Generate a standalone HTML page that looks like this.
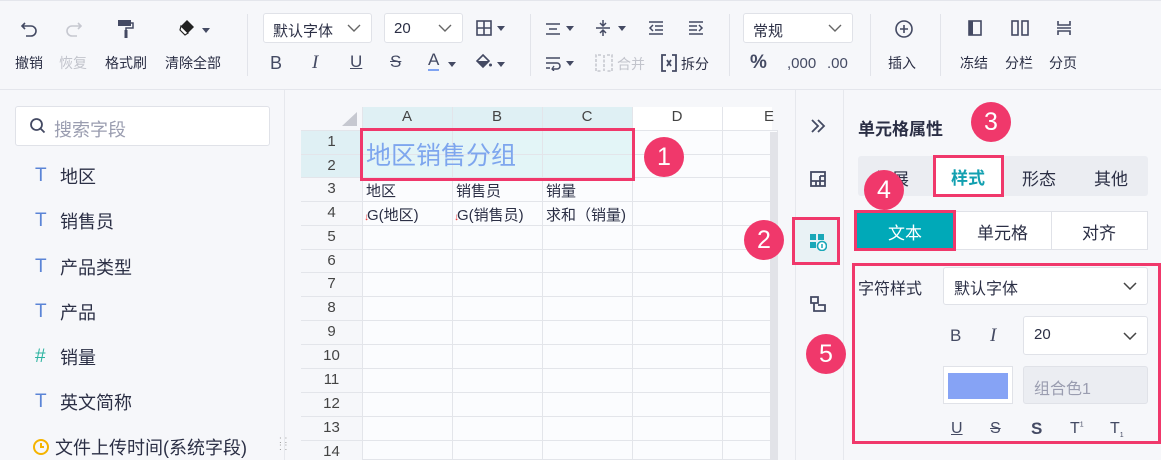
<!DOCTYPE html>
<html><head><meta charset="utf-8"><style>
*{margin:0;padding:0;box-sizing:border-box}
body{width:1161px;height:460px;overflow:hidden;background:#f6f7fa;font-family:"Liberation Sans","Noto Sans CJK SC",sans-serif;color:#2b2f45;position:relative}
.a{position:absolute}
.tb{left:0;top:0;width:1161px;height:90px;background:#f6f7fa;border-top:1px solid #e4e6ec;border-bottom:1px solid #e4e6ec}
.lbl{font-size:14px;white-space:nowrap}
.sel{background:#fff;border:1px solid #e0e2e8;border-radius:3px;height:30px;font-size:14px;padding:6px 9px}
.sel svg,.sel2 svg{position:absolute;right:10px;top:50%;margin-top:-4px}
.sep{width:1px;background:#e2e4ea;top:14px;height:62px}
.fld{left:35px;font-size:18px;display:flex;align-items:center}
.fld i{font-style:normal;color:#5b84d6;font-size:19px;width:20px;display:inline-block}
.gl{background:#e3e5ea}
.rn{left:301px;width:61px;text-align:center;font-size:15px;color:#444}
.cir{border-radius:50%;background:#f0386b;color:#fff;font-size:25px;text-align:center;width:40px;height:40px;line-height:40px}
.box{border:3px solid #f0386b}
.ch{font-size:15px;color:#444;text-align:center;top:108px}
.tri{border-left:4px solid transparent;border-right:4px solid transparent;border-top:5px solid #444a63}
.ic{color:#444a63}
</style></head><body>
<div class="a tb"></div>
<!-- toolbar -->
<svg class="a" style="left:20px;top:20px" width="20" height="18" viewBox="0 0 20 18"><path d="M5 3 L2 6 L5 9 M2 6 H11 a5 5 0 0 1 0 10 H6" fill="none" stroke="#444a63" stroke-width="1.6"/></svg>
<svg class="a" style="left:63px;top:20px" width="20" height="18" viewBox="0 0 20 18"><path d="M15 3 L18 6 L15 9 M18 6 H9 a5 5 0 0 0 0 10 H14" fill="none" stroke="#c6c8d0" stroke-width="1.6"/></svg>
<svg class="a" style="left:117px;top:19px" width="18" height="20" viewBox="0 0 18 20"><rect x="1" y="1" width="13" height="6" fill="#444a63"/><path d="M14 4h2v5H9v3" fill="none" stroke="#444a63" stroke-width="1.5"/><rect x="7.5" y="11" width="3" height="8" fill="#444a63"/></svg>
<svg class="a" style="left:178px;top:19px" width="22" height="18" viewBox="0 0 22 18"><path d="M9 1 L16 8 L10 14 L3 7 Z" fill="#222"/><path d="M3 7 L10 14 L7 16 L2 11 Z" fill="#fff" stroke="#222" stroke-width="1.2"/></svg>
<div class="a tri" style="left:202px;top:28px"></div>
<div class="a lbl" style="left:15px;top:53px">撤销</div>
<div class="a lbl" style="left:59px;top:53px;color:#c2c4cc">恢复</div>
<div class="a lbl" style="left:105px;top:53px">格式刷</div>
<div class="a lbl" style="left:165px;top:53px">清除全部</div>
<div class="a sep" style="left:247px"></div>
<div class="a sel" style="left:263px;top:13px;width:109px;font-size:15px">默认字体<svg width="14" height="8"><path d="M1 1l6 6 6-6" fill="none" stroke="#666" stroke-width="1.4"/></svg></div>
<div class="a sel" style="left:384px;top:13px;width:79px;font-size:15px">20<svg width="14" height="8"><path d="M1 1l6 6 6-6" fill="none" stroke="#666" stroke-width="1.4"/></svg></div>
<svg class="a" style="left:476px;top:20px" width="16" height="16"><rect x="1" y="1" width="14" height="14" fill="none" stroke="#444a63" stroke-width="1.6"/><path d="M8 1v14M1 8h14" stroke="#444a63" stroke-width="1.6"/></svg>
<div class="a tri" style="left:497px;top:26px"></div>
<div class="a ic" style="left:270px;top:53px;font-size:18px">B</div>
<div class="a ic" style="left:312px;top:52px;font-size:19px;font-family:'Liberation Serif';font-style:italic">I</div>
<div class="a ic" style="left:350px;top:52px;font-size:17px;text-decoration:underline">U</div>
<div class="a ic" style="left:390px;top:52px;font-size:17px;text-decoration:line-through">S</div>
<div class="a ic" style="left:428px;top:51px;font-size:17px;border-bottom:2px solid #7fa3f2;line-height:18px">A</div>
<div class="a tri" style="left:448px;top:62px"></div>
<svg class="a" style="left:475px;top:53px" width="18" height="18"><path d="M8 2 L14 8 L8 14 L2 8 Z" fill="none" stroke="#444a63" stroke-width="1.6"/><path d="M2 8 L14 8 L8 14 Z" fill="#444a63"/><circle cx="15.5" cy="12" r="1.5" fill="#444a63"/></svg>
<div class="a tri" style="left:497px;top:62px"></div>
<div class="a sep" style="left:530px"></div>
<svg class="a" style="left:545px;top:21px" width="16" height="16"><path d="M1 3h14M4 8h8M1 13h14" stroke="#444a63" stroke-width="1.5"/></svg>
<div class="a tri" style="left:566px;top:26px"></div>
<svg class="a" style="left:545px;top:55px" width="16" height="16"><path d="M1 3h14M1 8h11a3 3 0 0 1 0 6H8M1 13h4" stroke="#444a63" stroke-width="1.5" fill="none"/><path d="M9 11l-2 3 2 2" stroke="#444a63" stroke-width="1.3" fill="none"/></svg>
<div class="a tri" style="left:566px;top:61px"></div>
<svg class="a" style="left:595px;top:19px" width="16" height="18"><path d="M1 9h14M8 1v6M5 4l3 3 3-3M8 17v-6M5 14l3-3 3 3" stroke="#444a63" stroke-width="1.5" fill="none"/></svg>
<div class="a tri" style="left:618px;top:26px"></div>
<svg class="a" style="left:648px;top:20px" width="16" height="16"><path d="M1 2h14M7 6h8M7 10h8M1 14h14M5 5l-3 3 3 3" stroke="#444a63" stroke-width="1.5" fill="none"/></svg>
<svg class="a" style="left:688px;top:20px" width="16" height="16"><path d="M1 2h14M1 6h8M1 10h8M1 14h14M11 5l3 3-3 3" stroke="#444a63" stroke-width="1.5" fill="none"/></svg>
<svg class="a" style="left:595px;top:54px" width="18" height="18"><path d="M6 1H1v16h5M12 1h5v16h-5M9 1v16" fill="none" stroke="#c6c8d0" stroke-width="1.6" stroke-dasharray="3 1.5"/></svg>
<div class="a lbl" style="left:617px;top:54px;color:#c2c4cc">合并</div>
<svg class="a" style="left:660px;top:54px" width="18" height="18"><path d="M6 1H2v16h4M12 1h4v16h-4M7 6l2 3-2 3M11 6l-2 3 2 3" fill="none" stroke="#444a63" stroke-width="1.8"/></svg>
<div class="a lbl" style="left:681px;top:54px">拆分</div>
<div class="a sep" style="left:729px"></div>
<div class="a sel" style="left:743px;top:13px;width:110px;font-size:15px">常规<svg width="14" height="8"><path d="M1 1l6 6 6-6" fill="none" stroke="#666" stroke-width="1.4"/></svg></div>
<div class="a ic" style="left:750px;top:52px;font-size:19px;font-weight:bold">%</div>
<div class="a ic" style="left:787px;top:55px;font-size:15px">,000</div>
<div class="a ic" style="left:827px;top:55px;font-size:15px">.00</div>
<div class="a sep" style="left:870px"></div>
<svg class="a" style="left:894px;top:19px" width="20" height="20"><circle cx="10" cy="10" r="8" fill="none" stroke="#444a63" stroke-width="1.6"/><path d="M10 6v8M6 10h8" stroke="#444a63" stroke-width="1.6"/></svg>
<div class="a lbl" style="left:888px;top:53px">插入</div>
<div class="a sep" style="left:940px"></div>
<svg class="a" style="left:968px;top:20px" width="14" height="16"><rect x="1" y="1" width="12" height="14" fill="none" stroke="#444a63" stroke-width="1.6"/><rect x="1" y="1" width="4" height="14" fill="#444a63"/></svg>
<svg class="a" style="left:1011px;top:20px" width="18" height="16"><rect x="1" y="1" width="6" height="14" fill="none" stroke="#444a63" stroke-width="1.6"/><rect x="11" y="1" width="6" height="14" fill="none" stroke="#444a63" stroke-width="1.6"/></svg>
<svg class="a" style="left:1056px;top:20px" width="16" height="16"><path d="M2 1v4h12V1M1 8h14M2 15v-4h12v4" fill="none" stroke="#444a63" stroke-width="1.6"/></svg>
<div class="a lbl" style="left:960px;top:53px">冻结</div>
<div class="a lbl" style="left:1005px;top:53px">分栏</div>
<div class="a lbl" style="left:1049px;top:53px">分页</div>

<!-- left panel -->
<div class="a" style="left:284px;top:90px;width:1px;height:370px;background:#e6e8ed"></div>
<div class="a" style="left:15px;top:106px;width:255px;height:40px;background:#fff;border:1px solid #e0e2e8;border-radius:3px"></div>
<svg class="a" style="left:29px;top:117px" width="18" height="18"><circle cx="7.5" cy="7.5" r="5.5" fill="none" stroke="#444a63" stroke-width="1.8"/><path d="M11.5 11.5l4 4" stroke="#444a63" stroke-width="1.8"/></svg>
<div class="a" style="left:54px;top:116px;font-size:18px;color:#9a9db0">搜索字段</div>
<div class="a fld" style="top:163px"><i>T</i>&nbsp;地区</div>
<div class="a fld" style="top:208px"><i>T</i>&nbsp;销售员</div>
<div class="a fld" style="top:254px"><i>T</i>&nbsp;产品类型</div>
<div class="a fld" style="top:299px"><i>T</i>&nbsp;产品</div>
<div class="a fld" style="top:344px"><i style="color:#2cb3a0">#</i>&nbsp;销量</div>
<div class="a fld" style="top:389px"><i>T</i>&nbsp;英文简称</div>
<div class="a fld" style="top:434px"><svg width="18" height="18" style="margin-right:5px;margin-left:-3px"><circle cx="9" cy="9" r="7" fill="none" stroke="#f5b400" stroke-width="2"/><path d="M9 5v4h3" stroke="#f5b400" stroke-width="2" fill="none"/></svg>文件上传时间(系统字段)</div>
<div class="a" style="left:279px;top:437px;color:#999;font-size:10px;line-height:7px">: :<br>: :</div>

<!-- grid -->
<div class="a" style="left:301px;top:107px;width:477px;height:353px;background:#fbfcfe;border:1px solid #e3e5ea"></div>
<div class="a" style="left:301px;top:107px;width:61px;height:353px;background:#f6f7fa"></div>
<div class="a" style="left:301px;top:107px;width:477px;height:23px;background:#f6f7fa"></div>
<div class="a" style="left:362px;top:107px;width:270px;height:23px;background:#dff0f4"></div>
<div class="a" style="left:632px;top:107px;width:140px;height:23px;background:#fff"></div>
<div class="a" style="left:301px;top:130px;width:61px;height:47px;background:#dff0f4"></div>
<div class="a" style="left:362px;top:130px;width:270px;height:47px;background:#e3f5f7"></div>
<svg class="a" style="left:342px;top:112px" width="16" height="14"><path d="M15 0V14H0Z" fill="#c6c8d0"/></svg>
<div id="g"></div>
<div class="a ch" style="left:362px;width:90px">A</div>
<div class="a ch" style="left:452px;width:90px">B</div>
<div class="a ch" style="left:542px;width:90px">C</div>
<div class="a ch" style="left:632px;width:90px">D</div>
<div class="a ch" style="left:722px;width:94px">E</div>
<div class="a" style="left:770px;top:132px;width:8px;height:328px;background:#e2e3e8"></div>
<div class="a" style="left:366px;top:136px;font-size:25px;color:#7ea6ee">地区销售分组</div>
<div class="a" style="left:366px;top:180px;font-size:15px">地区</div>
<div class="a" style="left:456px;top:180px;font-size:15px">销售员</div>
<div class="a" style="left:546px;top:180px;font-size:15px">销量</div>
<div class="a" style="left:364px;top:204px;font-size:15px"><span style="color:#e33;font-size:10px;margin-right:-2px">↓</span>G(地区)</div>
<div class="a" style="left:454px;top:204px;font-size:15px"><span style="color:#e33;font-size:10px;margin-right:-2px">↓</span>G(销售员)</div>
<div class="a" style="left:546px;top:204px;font-size:15px">求和（销量)</div>
<script>
var h='';var ys=[130,153.5,177,201,225,248.5,272,296,320,344,368,392,416,439.5];
for(var i=0;i<ys.length;i++){h+='<div class="a gl" style="left:301px;top:'+Math.round(ys[i])+'px;width:477px;height:1px"></div>';
h+='<div class="a rn" style="top:'+Math.round(ys[i]+3)+'px">'+(i+1)+'</div>';}
[362,452,542,632,722].forEach(function(x){h+='<div class="a gl" style="left:'+x+'px;top:107px;width:1px;height:353px"></div>';});
document.getElementById('g').outerHTML=h;
</script>
<div class="a box" style="left:360px;top:128px;width:275px;height:53px"></div>
<div class="a cir" style="left:644px;top:137px">1</div>

<!-- sidebar -->
<div class="a" style="left:795px;top:90px;width:1px;height:370px;background:#e6e8ed"></div>
<div class="a" style="left:843px;top:90px;width:1px;height:370px;background:#e6e8ed"></div>
<svg class="a" style="left:810px;top:119px" width="16" height="14"><path d="M2 1l6 6-6 6M8 1l6 6-6 6" fill="none" stroke="#444a63" stroke-width="1.8"/></svg>
<svg class="a" style="left:810px;top:171px" width="16" height="16"><rect x="1" y="1" width="14" height="14" fill="none" stroke="#444a63" stroke-width="1.8"/><path d="M1 10h14M6 10v5M10 5v10M10 5h5" stroke="#444a63" stroke-width="1.8"/></svg>
<div class="a" style="left:794px;top:219px;width:45px;height:44px;background:#e9f2f5"></div>
<svg class="a" style="left:809px;top:233px" width="18" height="18"><rect x="1" y="1" width="6" height="6" fill="#1aa8b8"/><rect x="9" y="1" width="6" height="6" fill="#1aa8b8"/><rect x="1" y="9" width="6" height="6" fill="#1aa8b8"/><circle cx="13" cy="13" r="4.5" fill="#fff" stroke="#1aa8b8" stroke-width="1.6"/><path d="M13 11v4" stroke="#1aa8b8" stroke-width="1.5"/></svg>
<div class="a box" style="left:792px;top:217px;width:48px;height:48px"></div>
<div class="a cir" style="left:744px;top:220px">2</div>
<svg class="a" style="left:809px;top:296px" width="18" height="17"><path d="M2 1h7v6H2ZM5 7v8h11V9H9" fill="none" stroke="#444a63" stroke-width="1.8"/></svg>

<!-- right panel -->
<div class="a" style="left:858px;top:115px;font-size:17px;font-weight:bold;color:#2b2f45">单元格属性</div>
<div class="a cir" style="left:971px;top:102px">3</div>
<div class="a" style="left:858px;top:156px;width:290px;height:40px;background:#ebedf2;border-radius:3px"></div>
<div class="a" style="left:875px;top:165px;font-size:17px">扩展</div>
<div class="a" style="left:936px;top:158px;width:66px;height:36px;background:#fff"></div>
<div class="a" style="left:951px;top:164px;font-size:17px;font-weight:bold;color:#12a0b0">样式</div>
<div class="a" style="left:1022px;top:165px;font-size:17px">形态</div>
<div class="a" style="left:1094px;top:165px;font-size:17px">其他</div>
<div class="a box" style="left:933px;top:155px;width:71px;height:42px"></div>
<div class="a cir" style="left:864px;top:170px">4</div>
<div class="a" style="left:855px;top:211px;width:293px;height:39px;background:#fff;border:1px solid #e0e2e8"></div>
<div class="a" style="left:1051px;top:211px;width:1px;height:39px;background:#e0e2e8"></div>
<div class="a" style="left:855px;top:211px;width:100px;height:39px;background:#00a9b8"></div>
<div class="a box" style="left:854px;top:210px;width:102px;height:41px"></div>
<div class="a" style="left:888px;top:219px;font-size:17px;color:#fff">文本</div>
<div class="a" style="left:977px;top:219px;font-size:17px">单元格</div>
<div class="a" style="left:1082px;top:219px;font-size:17px">对齐</div>
<div class="a" style="left:858px;top:275px;font-size:16px">字符样式</div>
<div class="a sel2" style="left:943px;top:267px;width:205px;height:38px;background:#fff;border:1px solid #e0e2e8;border-radius:3px;font-size:16px;padding:7px 10px">默认字体<svg width="14" height="8"><path d="M1 1l6 6 6-6" fill="none" stroke="#444" stroke-width="1.5"/></svg></div>
<div class="a ic" style="left:950px;top:326px;font-size:17px">B</div>
<div class="a ic" style="left:990px;top:325px;font-size:19px;font-family:'Liberation Serif';font-style:italic">I</div>
<div class="a sel2" style="left:1023px;top:316px;width:125px;height:39px;background:#fff;border:1px solid #e0e2e8;border-radius:3px;font-size:15px;padding:9px 10px">20<svg width="14" height="8"><path d="M1 1l6 6 6-6" fill="none" stroke="#444" stroke-width="1.5"/></svg></div>
<div class="a" style="left:943px;top:366px;width:70px;height:38px;background:#fff;border:1px solid #e0e2e8"></div>
<div class="a" style="left:948px;top:373px;width:60px;height:26px;background:#86a3f5"></div>
<div class="a" style="left:1023px;top:366px;width:125px;height:38px;background:#ebedf2;border:1px solid #e0e2e8;border-radius:3px;font-size:16px;color:#9a9db0;padding:8px 10px">组合色1</div>
<div class="a ic" style="left:951px;top:420px;font-size:16px;text-decoration:underline">U</div>
<div class="a ic" style="left:990px;top:420px;font-size:16px;text-decoration:line-through">S</div>
<div class="a ic" style="left:1031px;top:419px;font-size:17px;font-weight:bold">S</div>
<div class="a ic" style="left:1070px;top:420px;font-size:16px">T<sup style="font-size:7px">1</sup></div>
<div class="a ic" style="left:1110px;top:420px;font-size:16px">T<sub style="font-size:7px">1</sub></div>
<div class="a box" style="left:852px;top:263px;width:309px;height:181px"></div>
<div class="a cir" style="left:806px;top:334px">5</div>
</body></html>
